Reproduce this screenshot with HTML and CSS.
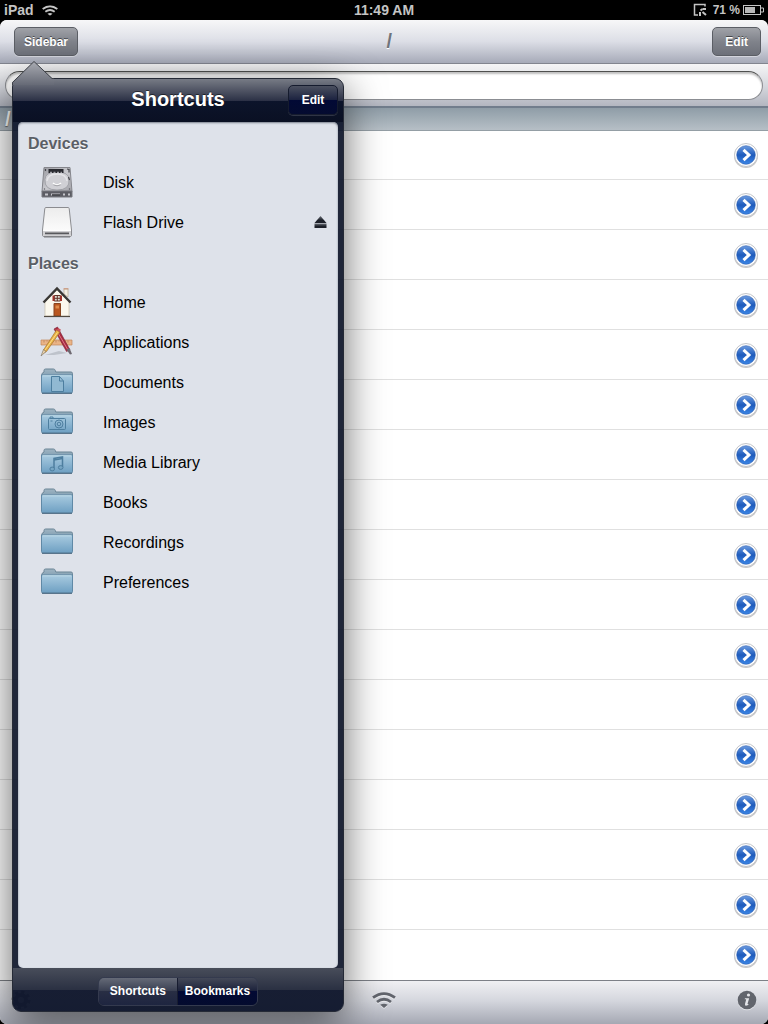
FILE: index.html
```html
<!DOCTYPE html>
<html lang="en">
<head>
  <meta charset="utf-8">
  <meta name="viewport" content="width=device-width, initial-scale=1">
  <title>Files</title>
  <link rel="stylesheet" href="styles.css">
</head>
<body>
  <!-- shared icons -->
  <svg class="defs" width="0" height="0" aria-hidden="true">
    <defs>
      <linearGradient id="blue" x1="0" y1="0" x2="0" y2="1">
        <stop offset="0" stop-color="#6c9be0"/>
        <stop offset=".5" stop-color="#1f5cbd"/>
        <stop offset="1" stop-color="#3b86e6"/>
      </linearGradient>
      <linearGradient id="folder-fill" x1="0" y1="0" x2="0" y2="1">
        <stop offset="0" stop-color="#a9cbe0"/>
        <stop offset="1" stop-color="#6d9fc2"/>
      </linearGradient>
      <linearGradient id="folder-back" x1="0" y1="0" x2="0" y2="1">
        <stop offset="0" stop-color="#9fb4c2"/>
        <stop offset="1" stop-color="#7f9db1"/>
      </linearGradient>
      <linearGradient id="metal" x1="0" y1="0" x2="1" y2="1">
        <stop offset="0" stop-color="#98999f"/>
        <stop offset=".5" stop-color="#c9c9ce"/>
        <stop offset="1" stop-color="#a2a2a8"/>
      </linearGradient>
      <linearGradient id="flash-fill" x1="0" y1="0" x2="0" y2="1">
        <stop offset="0" stop-color="#ececec"/>
        <stop offset="1" stop-color="#ffffff"/>
      </linearGradient>
      <linearGradient id="arrow-fill" x1="0" y1="0" x2="0" y2="1">
        <stop offset="0" stop-color="#a9abb2"/>
        <stop offset="1" stop-color="#666a76"/>
      </linearGradient>
      <linearGradient id="eject-fill" x1="0" y1="0" x2="0" y2="1">
        <stop offset="0" stop-color="#6a6e76"/>
        <stop offset=".6" stop-color="#1c2029"/>
      </linearGradient>
    </defs>
    <symbol id="chevron" viewBox="0 0 26 26">
      <circle cx="13" cy="14" r="12" fill="#000" opacity=".22"/>
      <circle cx="13" cy="13" r="11.500" fill="#fff" stroke="#c3c5ca"/>
      <circle cx="13" cy="13" r="9.300" fill="url(#blue)" stroke="#2a5cae" stroke-width=".6"/>
      <path d="M10.500 7.800l5.500 5.200-5.500 5.200" fill="none" stroke="#fff" stroke-width="3"/>
    </symbol>
    <symbol id="folder" viewBox="0 0 34 34">
      <path d="M2 7.500L4 6V4.500q0-1.500 1.500-1.500h8q1.300 0 1.800 1.500L15.800 6H31q1.500 0 1.500 1.500V11H1.500z" fill="url(#folder-back)" stroke="#6b8596"/>
      <path d="M1.500 9h31v16.500q0 1.500-1.500 1.500H3q-1.500 0-1.500-1.500z" fill="url(#folder-fill)" stroke="#6089a6"/>
      <path d="M2.500 9.800h29" stroke="#c3deec"/>
      <path d="M2 27.300h30" stroke="#47657c"/>
    </symbol>
    <symbol id="wifi" viewBox="0 0 24 16">
      <g fill="none" stroke="currentColor" stroke-width="2.800">
        <path d="M1 5.700Q12-2.500 23 5.700"/>
        <path d="M5 10Q12 4.600 19 10"/>
      </g>
      <path d="M8.200 12.800Q12 10.600 15.800 12.800L12 16z" fill="currentColor"/>
    </symbol>
  </svg>

  <header class="status">
    <span class="status-left">iPad
      <svg class="status-wifi" viewBox="0 0 24 16"><use href="#wifi"/></svg>
    </span>
    <span>11:49 AM</span>
    <span class="status-right">
      <svg class="status-lock" viewBox="0 0 14 14" fill="none" stroke="#c4c4c4" stroke-width="1.500">
        <path d="M12 3.500V1.500H1.500v10.500H5"/>
        <path d="M9.500 6H13M7 9v4M9.500 9l3.500 3" stroke-width="2"/>
        <path d="M7.500 7.500l2-1.500" stroke-width="2"/>
      </svg>
      <span class="battery-text">71 %</span>
      <svg class="battery" viewBox="0 0 21 10">
        <rect x=".5" y=".5" width="17" height="9" fill="none" stroke="#c4c4c4"/>
        <rect x="2" y="2" width="10" height="6" fill="#b8b8b8"/>
        <path d="M18 3h2.500v4H18" fill="none" stroke="#c4c4c4"/>
      </svg>
    </span>
  </header>

  <div class="app">
    <header class="toolbar">
      <button class="bar-button">Sidebar</button>
      <h1 class="toolbar-title">/</h1>
      <button class="bar-button">Edit</button>
    </header>
    <div class="search">
      <input class="search-input" type="search" aria-label="Search">
    </div>
    <div class="path">/</div>

    <ul class="files">
      <li class="file"><button class="detail" aria-label="Details"><svg viewBox="0 0 26 26"><use href="#chevron"/></svg></button></li>
      <li class="file"><button class="detail" aria-label="Details"><svg viewBox="0 0 26 26"><use href="#chevron"/></svg></button></li>
      <li class="file"><button class="detail" aria-label="Details"><svg viewBox="0 0 26 26"><use href="#chevron"/></svg></button></li>
      <li class="file"><button class="detail" aria-label="Details"><svg viewBox="0 0 26 26"><use href="#chevron"/></svg></button></li>
      <li class="file"><button class="detail" aria-label="Details"><svg viewBox="0 0 26 26"><use href="#chevron"/></svg></button></li>
      <li class="file"><button class="detail" aria-label="Details"><svg viewBox="0 0 26 26"><use href="#chevron"/></svg></button></li>
      <li class="file"><button class="detail" aria-label="Details"><svg viewBox="0 0 26 26"><use href="#chevron"/></svg></button></li>
      <li class="file"><button class="detail" aria-label="Details"><svg viewBox="0 0 26 26"><use href="#chevron"/></svg></button></li>
      <li class="file"><button class="detail" aria-label="Details"><svg viewBox="0 0 26 26"><use href="#chevron"/></svg></button></li>
      <li class="file"><button class="detail" aria-label="Details"><svg viewBox="0 0 26 26"><use href="#chevron"/></svg></button></li>
      <li class="file"><button class="detail" aria-label="Details"><svg viewBox="0 0 26 26"><use href="#chevron"/></svg></button></li>
      <li class="file"><button class="detail" aria-label="Details"><svg viewBox="0 0 26 26"><use href="#chevron"/></svg></button></li>
      <li class="file"><button class="detail" aria-label="Details"><svg viewBox="0 0 26 26"><use href="#chevron"/></svg></button></li>
      <li class="file"><button class="detail" aria-label="Details"><svg viewBox="0 0 26 26"><use href="#chevron"/></svg></button></li>
      <li class="file"><button class="detail" aria-label="Details"><svg viewBox="0 0 26 26"><use href="#chevron"/></svg></button></li>
      <li class="file"><button class="detail" aria-label="Details"><svg viewBox="0 0 26 26"><use href="#chevron"/></svg></button></li>
      <li class="file"><button class="detail" aria-label="Details"><svg viewBox="0 0 26 26"><use href="#chevron"/></svg></button></li>
    </ul>

    <footer class="bottom-bar">
      <button class="icon-button" aria-label="Settings">
        <svg width="20" height="20" viewBox="0 0 20 20" fill="none" stroke="currentColor">
          <circle cx="10" cy="10" r="5" stroke-width="4"/>
          <circle cx="10" cy="10" r="8" stroke-width="3" stroke-dasharray="3.140 3.140"/>
        </svg>
      </button>
      <button class="icon-button" aria-label="Network">
        <svg width="24" height="16" viewBox="0 0 24 16"><use href="#wifi"/></svg>
      </button>
      <button class="icon-button" aria-label="Info">
        <svg width="20" height="20" viewBox="0 0 20 20">
          <circle cx="10" cy="10" r="9.300" fill="currentColor"/>
          <circle cx="11.500" cy="5" r="1.600" fill="#e4e5e9"/>
          <path d="M8 8.300h4.200L10.600 13.500q-.2.900.9.400l-.3 1q-3.700 1.800-3.200-.8L9.200 9.300H7.700z" fill="#e4e5e9"/>
        </svg>
      </button>
    </footer>

    <section class="popover">
      <svg class="popover-arrow" width="42" height="26" viewBox="0 0 42 26">
        <path d="M0 26V23.500L22 2.500 40.500 19.500H42V26z" fill="url(#arrow-fill)"/>
        <path d="M.5 26V23.500L22 2.500 40 19.500H42" fill="none" stroke="#3d4047"/>
      </svg>
      <header class="popover-header">
        <h2 class="popover-title">Shortcuts</h2>
        <button class="dark-button">Edit</button>
      </header>

      <nav class="panel">
        <h3 class="group">Devices</h3>
        <ul class="shortcuts">
          <li class="shortcut">
            <a class="shortcut-link" href="#disk">
              <svg class="icon" viewBox="0 0 34 34">
                <path d="M4 1.500h26L32 25.500H2z" fill="url(#metal)" stroke="#85868c"/>
                <path d="M2 25h30v6H2z" fill="#5c5d64" stroke="#77787e"/>
                <path d="M5 28.500h3M11 28.500h9M23 28.500h2M28 28.500h2" stroke="#c5c6cb" stroke-width="2"/>
                <path d="M12 29h8" stroke="#33343a" stroke-width="1.500"/>
                <path d="M5 13.500Q5 6 17 6t12 7.500q1 10.500-12 10.500T5 13.500z" fill="#d0d0d5" stroke="#96979d" stroke-width=".8"/>
                <path d="M7 15q1-7 10-7t10 7" fill="none" stroke="#e4e4e8" stroke-width="1.500"/>
                <path d="M13 17q4 4 8 0" fill="none" stroke="#fff" stroke-width="1.500"/>
                <path d="M13.500 18.800q3.500 2 7 0" fill="none" stroke="#8b8c92" stroke-width=".8"/>
                <path d="M8.500 3h15v4h-15z" fill="#292a30"/>
                <path d="M10 6.300h12" stroke="#c0c0c6"  stroke-dasharray="2 1.500"/>
                <path d="M27 3l2 .5v3M5.500 3v2M28.500 11l1 3M4.500 22.500v1M29.500 22.500v1" fill="none" stroke="#45464c" stroke-width="1.200"/>
              </svg>
              Disk
            </a>
          </li>
          <li class="shortcut">
            <a class="shortcut-link" href="#flash">
              <svg class="icon" viewBox="0 0 34 34">
                <path d="M6 1.500h22q1 0 1.200 1L31.500 24v5q0 1.500-1.500 1.500H4Q2.500 30.500 2.500 29v-5L4.800 2.500q.2-1 1.200-1z" fill="url(#flash-fill)" stroke="#8b8c90"/>
                <path d="M3 25h28v3.500q0 1.500-1.500 1.500h-25Q3 30 3 28.500z" fill="#d0d0d3"/>
                <path d="M5 27.300h24" stroke="#58595d" stroke-width="1.800"/>
                <path d="M3.500 24.500h27" stroke="#fff"/>
                <path d="M4 31h26" stroke="#77787c"/>
              </svg>
              Flash Drive
            </a>
            <button class="eject" aria-label="Eject">
              <svg width="13" height="12" viewBox="0 0 13 12" fill="url(#eject-fill)">
                <path d="M6.500 0L12.500 7H.5z"/>
                <path d="M.5 7.600h12V12H.5z"/>
              </svg>
            </button>
          </li>
        </ul>
        <h3 class="group">Places</h3>
        <ul class="shortcuts">
          <li class="shortcut">
            <a class="shortcut-link" href="#home">
              <svg class="icon" viewBox="0 0 34 34">
                <path d="M24 3h4v8l-4-3z" fill="#f3eee4" stroke="#b9a78e" stroke-width=".7"/>
                <path d="M23.500 2.800h5" stroke="#c98f72" stroke-width="1"/>
                <path d="M5 16L17 4l12 12v14H5z" fill="#fbf8ee" stroke="#c8bea9" stroke-width=".7"/>
                <path d="M3.500 16.500L17 2.500l13.500 14" fill="none" stroke="#393735" stroke-width="2.400"/>
                <path d="M14.300 9.500h6v5.500h-6z" fill="#dedbd0" stroke="#623329"/>
                <path d="M12.500 9.500h2V15h-2zM20 9.500h2V15h-2z" fill="#a2322b"/>
                <path d="M17.300 9.500V15M14.300 12.300h6" stroke="#623329"/>
                <path d="M14 17.500h6.500v12.500H14z" fill="#b95720" stroke="#8a4520"/>
                <path d="M15.500 19.500h3.500v3h-3.500z" fill="#df8b4b"/>
                <path d="M4 30.500h26" stroke="#514b42" stroke-width="1.200"/>
              </svg>
              Home
            </a>
          </li>
          <li class="shortcut">
            <a class="shortcut-link" href="#applications">
              <svg class="icon" viewBox="0 0 34 34">
                <path d="M5 29l14-4 8 2-13 2z" fill="#858991" opacity=".35"/>
                <path d="M1 14h31v5H1z" fill="#eab487" stroke="#c38659" stroke-width=".7"/>
                <path d="M4 14.500v2M7 14.500v1M10 14.500v2M13 14.500v1M16 14.500v2M19 14.500v1M22 14.500v2M25 14.500v1M28 14.500v2" stroke="#a56f49" stroke-width=".6"/>
                <path d="M14 3l3.500-2L30 24l-3.500 1.500z" fill="#a92b40" stroke="#782035" stroke-width=".6"/>
                <path d="M16 3.500L28 24" stroke="#dc7888"/>
                <path d="M26.500 23.500l3-1.500 2.500 6-2 .5z" fill="#6d6870"/>
                <path d="M16.500 4l3.500 2L6.500 25.500l-3.500 2 .8-4z" fill="#e8b145" stroke="#a37330" stroke-width=".7"/>
                <path d="M17.500 6.500L5 24" stroke="#fde08c"/>
                <path d="M3.500 23.500L6 25.500l-5 4.500z" fill="#ead3ac" stroke="#756d61" stroke-width=".6"/>
                <path d="M16.500 4l3.500 2 .8-2.500-2.500-1.500z" fill="#c9545b"/>
              </svg>
              Applications
            </a>
          </li>
          <li class="shortcut">
            <a class="shortcut-link" href="#documents">
              <svg class="icon" viewBox="0 0 34 34">
                <use href="#folder"/>
                <path d="M11.500 10.500h8l4 4.500v10.500h-12zM19.500 10.500V15h4" fill="#91b9d2" stroke="#4d7e9f"/>
              </svg>
              Documents
            </a>
          </li>
          <li class="shortcut">
            <a class="shortcut-link" href="#images">
              <svg class="icon" viewBox="0 0 34 34">
                <use href="#folder"/>
                <g fill="none" stroke="#4d7e9f">
                  <rect x="8.500" y="12.500" width="17" height="11" rx="1"/>
                  <circle cx="19" cy="18" r="4"/>
                  <circle cx="19" cy="18" r="1.800"/>
                  <path d="M10 12v-1h3v1M10.500 15h2"/>
                </g>
              </svg>
              Images
            </a>
          </li>
          <li class="shortcut">
            <a class="shortcut-link" href="#media">
              <svg class="icon" viewBox="0 0 34 34">
                <use href="#folder"/>
                <path d="M14 22.500v-10l8.500-1.500v10" fill="none" stroke="#4d7e9f" stroke-width="1.500"/>
                <path d="M14 14l8.500-1.500" stroke="#4d7e9f" stroke-width="1.500"/>
                <ellipse cx="12.200" cy="23" rx="2.300" ry="1.900" fill="#77a6c4" stroke="#4d7e9f"/>
                <ellipse cx="20.700" cy="21.500" rx="2.300" ry="1.900" fill="#77a6c4" stroke="#4d7e9f"/>
              </svg>
              Media Library
            </a>
          </li>
          <li class="shortcut">
            <a class="shortcut-link" href="#books"><svg class="icon" viewBox="0 0 34 34"><use href="#folder"/></svg>Books</a>
          </li>
          <li class="shortcut">
            <a class="shortcut-link" href="#recordings"><svg class="icon" viewBox="0 0 34 34"><use href="#folder"/></svg>Recordings</a>
          </li>
          <li class="shortcut">
            <a class="shortcut-link" href="#preferences"><svg class="icon" viewBox="0 0 34 34"><use href="#folder"/></svg>Preferences</a>
          </li>
        </ul>
      </nav>

      <footer class="popover-footer">
        <div class="segments">
          <button class="segment segment-on">Shortcuts</button>
          <button class="segment">Bookmarks</button>
        </div>
      </footer>
    </section>
  </div>
</body>
</html>
```

FILE: styles.css
```css
* {
  box-sizing: border-box;
}
body {
  display: flex;
  flex-direction: column;
  min-height: 100vh;
  margin: 0;
  background: #000;
  font-family: "Liberation Sans", Arial, sans-serif;
}
h1, h2, h3, ul {
  margin: 0;
  padding: 0;
}
ul {
  list-style: none;
}
button {
  padding: 0;
  border: 0;
  background: none;
  font: bold 12px "Liberation Sans", Arial, sans-serif;
}
svg {
  display: block;
}
.defs {
  position: absolute;
}

/* status bar */
.status {
  display: grid;
  grid-template-columns: 1fr auto 1fr;
  align-items: center;
  height: 20px;
  padding: 0 4px;
  color: #c4c4c4;
  font-size: 14px;
  font-weight: bold;
}
.status-left, .status-right {
  display: flex;
  align-items: center;
}
.status-left {
  gap: 8px;
}
.status-right {
  justify-content: flex-end;
}
.status-wifi {
  width: 16px;
  height: 11px;
}
.status-lock {
  width: 14px;
  height: 14px;
  margin-right: 6px;
}
.battery-text {
  font-size: 12px;
}
.battery {
  width: 21px;
  height: 10px;
  margin-left: 3px;
}

/* file browser */
.app {
  position: relative;
  display: flex;
  flex: 1;
  flex-direction: column;
  overflow: hidden;
  border-radius: 7px;
  background: #fff;
}
.toolbar {
  display: flex;
  align-items: center;
  height: 44px;
  padding: 0 7px 0 14px;
  border-bottom: 1px solid #82858f;
  background: linear-gradient(#f7f7f8, #dcdee6 50%, #a6aab8);
}
.toolbar-title {
  flex: 1;
  padding-right: 12px;
  color: #70747c;
  font-size: 20px;
  font-weight: bold;
  text-align: center;
  text-shadow: 0 1px 0 #fff;
}
.bar-button {
  height: 29px;
  padding: 0 9px;
  border: 1px solid #5b5e65;
  border-radius: 5px;
  background: linear-gradient(#a0a2a8, #80838b 50%, #6d7079);
  box-shadow: 0 1px 0 rgba(255, 255, 255, .4);
  color: #fff;
  text-shadow: 0 -1px 0 rgba(0, 0, 0, .5);
}
.bar-button:last-child {
  padding: 0 12px;
}
.search {
  height: 44px;
  padding: 7px 5px;
  border-bottom: 2px solid #717d8c;
  background: linear-gradient(#f5f5f6, #d4d6dc 55%, #b3b6c0);
}
.search-input {
  display: block;
  width: 100%;
  height: 29px;
  padding: 0 28px;
  border: 1px solid #8b8d92;
  border-top: 1px solid #4f504f;
  border-radius: 15px;
  background: #fff;
  box-shadow: inset 0 2px 2px rgba(0, 0, 0, .25);
  font-size: 14px;
}
.path {
  height: 23px;
  padding: 0 5px;
  border-bottom: 1px solid #949ea5;
  background: linear-gradient(#8f9da7, #b6bfc6);
  color: #fff;
  font-size: 20px;
  font-weight: bold;
  line-height: 22px;
  text-shadow: 0 1px 1px #666;
}
.files {
  flex: 1;
}
.file {
  display: flex;
  align-items: center;
  justify-content: flex-end;
  height: 50px;
  padding-right: 9px;
  border-bottom: 1px solid #e0e0e0;
}
.file:first-child {
  height: 49px;
}
.file:last-child {
  border-bottom: 0;
}
.detail svg {
  width: 26px;
  height: 26px;
}
.bottom-bar {
  display: flex;
  align-items: center;
  justify-content: space-between;
  height: 44px;
  padding: 0 11px 6px;
  border-top: 1px solid #7d8087;
  background: linear-gradient(#f0f0f3, #d5d7de 45%, #a5a8b3);
}
.icon-button {
  color: #62656d;
  filter: drop-shadow(0 1px 0 rgba(255, 255, 255, .5));
}

/* sidebar popover */
.popover {
  position: absolute;
  top: 58px;
  bottom: 12px;
  left: 12px;
  display: flex;
  flex-direction: column;
  width: 332px;
  padding: 0 5px;
  border: 1px solid #252a36;
  border-radius: 9px;
  background: rgba(14, 21, 42, .93);
  box-shadow: 0 10px 40px rgba(0, 0, 0, .6);
}
.popover-arrow {
  position: absolute;
  top: -20px;
  left: -1px;
}
.popover-header {
  display: grid;
  grid-template-columns: 50px 1fr 50px;
  align-items: center;
  height: 43px;
  margin: 0 -5px;
  padding: 0 5px 2px;
  border-radius: 8px 8px 0 0;
  background: linear-gradient(#777b85, #2b3045 22px, #0c142b 22px, #0a1023);
}
.popover-title {
  grid-column: 2;
  color: #fff;
  font-size: 20px;
  text-align: center;
  text-shadow: 0 -1px 0 rgba(0, 0, 0, .5);
}
.dark-button {
  height: 30px;
  border: 1px solid #151b2e;
  border-radius: 5px;
  background: linear-gradient(#4b505f, #1b2240 50%, #020935 50%, #040b30);
  box-shadow: 0 1px 0 rgba(255, 255, 255, .15);
  color: #fff;
}
.panel {
  flex: 1;
  border-radius: 5px;
  background: #dee2ea;
  box-shadow: inset 0 1px 2px #7b808c;
}
.group {
  height: 40px;
  padding-left: 10px;
  color: #5b5f66;
  font-size: 16px;
  line-height: 44px;
  text-shadow: 0 1px 0 #fff;
}
.shortcut {
  display: flex;
  align-items: center;
  justify-content: space-between;
  height: 40px;
  padding: 0 11px 0 22px;
}
.shortcut-link {
  display: flex;
  align-items: center;
  gap: 29px;
  color: #000;
  font-size: 16px;
  line-height: 40px;
  padding-top: 1px;
  text-decoration: none;
}
.icon {
  width: 34px;
  height: 34px;
}
.popover-footer {
  display: flex;
  align-items: center;
  justify-content: center;
  height: 43px;
  margin: 0 -5px;
  padding-top: 3px;
  border-radius: 0 0 8px 8px;
  background: linear-gradient(#484d5a, #2a3042 22px, rgba(16, 23, 46, .5) 22px);
}
.segments {
  display: flex;
  border: 1px solid #343a4e;
  border-radius: 6px;
  overflow: hidden;
}
.segment {
  height: 27px;
  padding: 0 7px;
  background: linear-gradient(#444958, #1a203a 50%, #020934 50%, #040b2e);
  color: #fff;
}
.segment-on {
  padding: 0 11px;
  border-right: 1px solid #171c30;
  background: linear-gradient(#656a77, #373d50 50%, #282e44 50%, #1e2540);
}
```
